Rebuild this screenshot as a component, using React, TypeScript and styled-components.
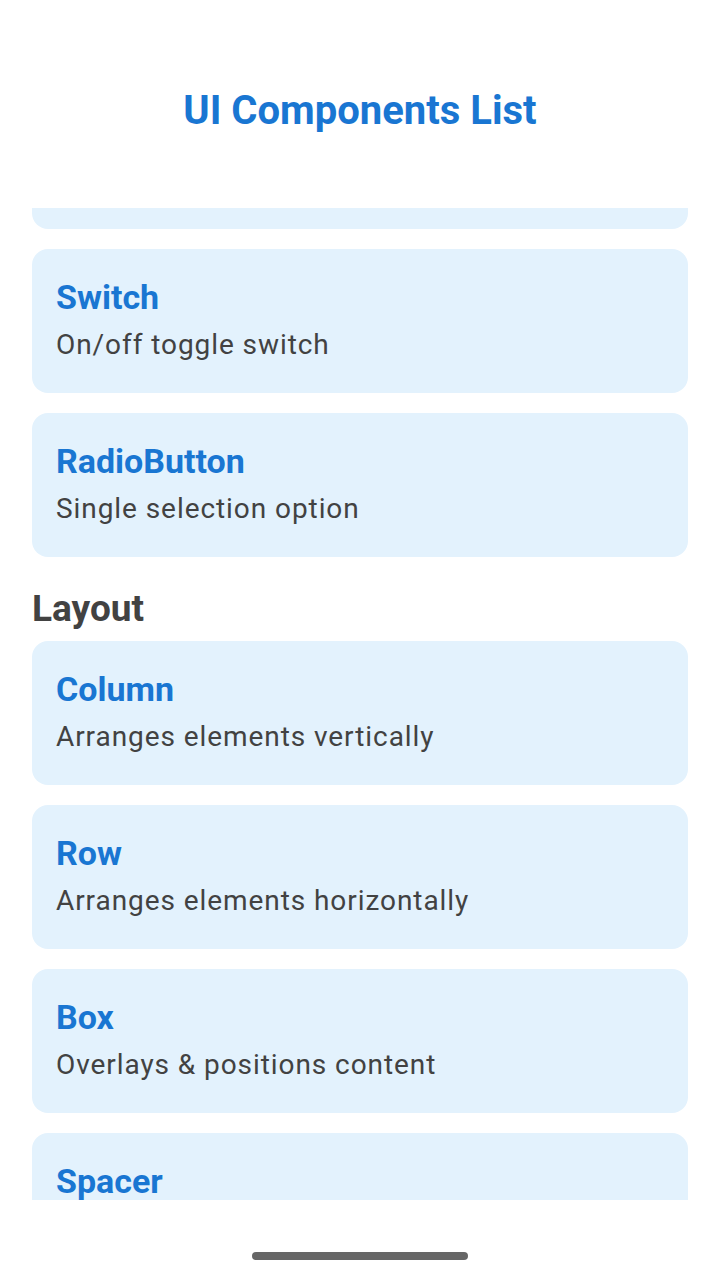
import React, { useLayoutEffect, useRef } from 'react';
import styled, { createGlobalStyle } from 'styled-components';

const GlobalStyle = createGlobalStyle`
    html, body {
        margin: 0;
        padding: 0;
        background: #ffffff;
        font-family: Roboto, "Noto Sans", sans-serif;
    }
`;

type Item = { name: string; desc: string };
type Section = { title?: string; items: Item[] };

const sections: Section[] = [
    {
        items: [
            { name: 'Checkbox', desc: 'Check or uncheck option' },
            { name: 'Switch', desc: 'On/off toggle switch' },
            { name: 'RadioButton', desc: 'Single selection option' }
        ]
    },
    {
        title: 'Layout',
        items: [
            { name: 'Column', desc: 'Arranges elements vertically' },
            { name: 'Row', desc: 'Arranges elements horizontally' },
            { name: 'Box', desc: 'Overlays & positions content' },
            { name: 'Spacer', desc: 'Adds empty space' }
        ]
    }
];

const App = () => {
    const scrollRef = useRef<HTMLDivElement>(null);
    const anchorRef = useRef<HTMLDivElement>(null);

    // list is scrolled so the Switch card sits 41px below the list top
    useLayoutEffect(() => {
        const box = scrollRef.current;
        const anchor = anchorRef.current;
        if (box && anchor) {
            box.scrollTop = anchor.offsetTop - 41;
        }
    }, []);

    return (
        <>
            <GlobalStyle />
            <Screen>
                <Header>
                    <Title>UI Components List</Title>
                </Header>
                <ScrollArea ref={scrollRef}>
                    <List>
                        {sections.map((section, i) => (
                            <React.Fragment key={i}>
                                {section.title && <SectionTitle>{section.title}</SectionTitle>}
                                {section.items.map((item) => (
                                    <Card key={item.name} ref={item.name === 'Switch' ? anchorRef : undefined}>
                                        <CardTitle>{item.name}</CardTitle>
                                        <CardDesc>{item.desc}</CardDesc>
                                    </Card>
                                ))}
                            </React.Fragment>
                        ))}
                    </List>
                </ScrollArea>
                <NavBar>
                    <Handle />
                </NavBar>
            </Screen>
        </>
    );
};

export default App;

const Screen = styled.div`
    width: 720px;
    height: 1280px;
    display: flex;
    flex-direction: column;
    background: #ffffff;
    overflow: hidden;
`;
const Header = styled.div`
    height: 208px;
    flex-shrink: 0;
    display: flex;
    justify-content: center;
    align-items: flex-start;
    padding-top: 87px;
    box-sizing: border-box;
`;
const Title = styled.h1`
    margin: 0;
    font-size: 40px;
    line-height: 48px;
    font-weight: 700;
    color: #1976d2;
`;
const ScrollArea = styled.div`
    flex: 1;
    overflow: hidden;
    position: relative;
`;
const List = styled.div`
    display: flex;
    flex-direction: column;
    gap: 20px;
    padding: 0 32px 40px;
`;
const SectionTitle = styled.div`
    padding: 8px 0;
    margin-bottom: -20px;
    font-size: 37px;
    line-height: 48px;
    font-weight: 700;
    color: #424242;
`;
const Card = styled.div`
    display: flex;
    flex-direction: column;
    gap: 4px;
    padding: 24px 24px 28px;
    background: #e3f2fd;
    border-radius: 16px;
`;
const CardTitle = styled.div`
    font-size: 34px;
    line-height: 48px;
    font-weight: 700;
    color: #1976d2;
`;
const CardDesc = styled.div`
    font-size: 28px;
    line-height: 40px;
    letter-spacing: 0.93px;
    color: #424242;
`;
const NavBar = styled.div`
    height: 80px;
    flex-shrink: 0;
    display: flex;
    justify-content: center;
    align-items: flex-start;
    padding-top: 52px;
    box-sizing: border-box;
`;
const Handle = styled.div`
    width: 216px;
    height: 8px;
    border-radius: 4px;
    background: #666666;
`;
